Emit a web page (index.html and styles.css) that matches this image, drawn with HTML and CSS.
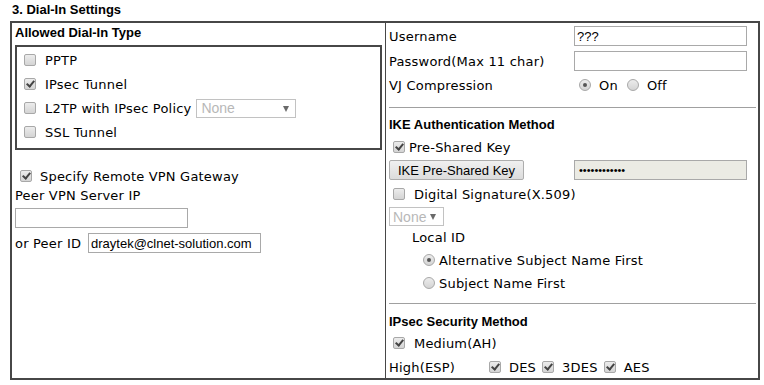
FILE: index.html
```html
<!DOCTYPE html>
<html lang="en">
<head>
  <meta charset="UTF-8" />
  <title>Dial-In Settings</title>
  <link rel="stylesheet" href="styles.css">
</head>
<body>

<h2 class="section-title">3. Dial-In Settings</h2>

<div class="panel">
  <!-- left: allowed types + remote gateway -->
  <div class="col col-left">
    <div class="group-title">Allowed Dial-In Type</div>
    <div class="type-box">
      <label class="type-row"><input type="checkbox" class="chk">PPTP</label>
      <label class="type-row"><input type="checkbox" class="chk" checked>IPsec Tunnel</label>
      <div class="type-row">
        <label class="inline"><input type="checkbox" class="chk">L2TP with IPsec Policy</label>
        <span class="select-wrap policy"><select disabled><option>None</option></select></span>
      </div>
      <label class="type-row"><input type="checkbox" class="chk">SSL Tunnel</label>
    </div>

    <div class="gateway">
      <label class="check-row gw"><input type="checkbox" class="chk" checked>Specify Remote VPN Gateway</label>
      <div class="plain-row">Peer VPN Server IP</div>
      <input type="text" class="text-input server-ip">
      <div class="peer-row">
        <span class="peer-label">or Peer ID</span>
        <input type="text" class="text-input" value="draytek@clnet-solution.com">
      </div>
    </div>
  </div>

  <!-- right: auth + security -->
  <div class="col col-right">
    <div class="field-row">
      <span class="field-label">Username</span>
      <input type="text" class="text-input" value="???">
    </div>
    <div class="field-row mt5">
      <span class="field-label">Password(Max 11 char)</span>
      <input type="password" class="text-input">
    </div>
    <div class="field-row mt4">
      <span class="field-label">VJ Compression</span>
      <label class="inline radio-opt"><input type="radio" name="vj" class="rad" checked>On</label>
      <label class="inline radio-opt off"><input type="radio" name="vj" class="rad">Off</label>
    </div>

    <div class="rule rule-top"></div>

    <div class="group-title ike-title">IKE Authentication Method</div>
    <label class="check-row psk"><input type="checkbox" class="chk" checked>Pre-Shared Key</label>
    <div class="field-row mt3">
      <span class="field-label"><button type="button" class="btn">IKE Pre-Shared Key</button></span>
      <input type="password" class="text-input key-input" value="123456789012" disabled>
    </div>
    <label class="check-row sig mt4"><input type="checkbox" class="chk">Digital Signature(X.509)</label>
    <div class="select-row">
      <span class="select-wrap cert"><select disabled><option>None</option></select></span>
    </div>
    <div class="local-id">Local ID</div>
    <label class="radio-row"><input type="radio" name="lid" class="rad" checked>Alternative Subject Name First</label>
    <label class="radio-row mt1"><input type="radio" name="lid" class="rad">Subject Name First</label>

    <div class="rule rule-bottom"></div>

    <div class="group-title sec-title">IPsec Security Method</div>
    <label class="check-row sig mt3"><input type="checkbox" class="chk" checked>Medium(AH)</label>
    <div class="field-row high-row">
      <span class="high-label">High(ESP)</span>
      <label class="inline cipher"><input type="checkbox" class="chk" checked>DES</label>
      <label class="inline cipher"><input type="checkbox" class="chk" checked>3DES</label>
      <label class="inline cipher"><input type="checkbox" class="chk" checked>AES</label>
    </div>
  </div>
</div>

</body>
</html>
```

FILE: styles.css
```css
* {
  box-sizing: border-box;
}
body {
  margin: 0;
  background: #fff;
  color: #000;
  font-family: "DejaVu Sans", Verdana, sans-serif;
  font-size: 13px;
  letter-spacing: 0.2px;
}

.section-title {
  margin: 0;
  height: 21px;
  padding: 2px 0 0 12px;
  letter-spacing: 0;
  font: bold 13px/16px "Liberation Sans", Arial, sans-serif;
}

.panel {
  margin-left: 10px;
  width: 750px;
  border: 2px solid #474747;
  display: grid;
  grid-template-columns: 374px 1fr;
}

.col-left {
  border-right: 1px solid #474747;
  padding: 2px 3px 0;
}
.col-right {
  padding: 3px 2px 1px 3px;
}

.group-title {
  letter-spacing: 0;
  font: bold 13px/16px "Liberation Sans", Arial, sans-serif;
}
.ike-title { margin-top: 9px; }
.sec-title { margin-top: 10px; }

/* checkbox / radio look */
.chk, .rad {
  appearance: none;
  -webkit-appearance: none;
  margin: 0;
  width: 12px;
  height: 12px;
  flex: none;
  position: relative;
  border: 1px solid #a8a8a8;
  background: linear-gradient(#ececec, #d4d4d4);
}
.chk {
  border-radius: 2px;
}
.chk:checked::after {
  content: "";
  position: absolute;
  left: 3px;
  top: 0px;
  width: 3px;
  height: 6px;
  border-right: 2px solid #444;
  border-bottom: 2px solid #444;
  transform: rotate(40deg);
}
.rad {
  border-radius: 50%;
}
.rad:checked::after {
  content: "";
  position: absolute;
  left: 3px;
  top: 3px;
  width: 4px;
  height: 4px;
  border-radius: 50%;
  background: #555;
}

.inline {
  display: inline-flex;
  align-items: center;
}

/* allowed types box */
.type-box {
  margin-top: 4px;
  border: 2px solid #474747;
  padding: 1px 0 4px 7px;
}
.type-row {
  display: flex;
  align-items: center;
  height: 24px;
}
.type-row .chk {
  margin-right: 9px;
}

.select-wrap {
  position: relative;
  display: inline-block;
}
.select-wrap select {
  appearance: none;
  -webkit-appearance: none;
  height: 19px;
  border: 1px solid #a9a9a9;
  border-radius: 0;
  background: #fff;
  color: #9a9a9a;
  padding: 0 0 0 4px;
  font: 14px "Liberation Sans", Arial, sans-serif;
}
.select-wrap::after {
  content: "";
  position: absolute;
  top: 7px;
  border-left: 3px solid transparent;
  border-right: 3px solid transparent;
  border-top: 6px solid #6a6a6a;
}
.policy {
  margin-left: 5px;
}
.policy select {
  width: 100px;
}
.policy::after {
  right: 7px;
}
.cert select {
  width: 55px;
  padding-left: 3px;
}
.cert::after {
  right: 8px;
}

/* remote gateway */
.gateway {
  margin-top: 16px;
}
.check-row {
  display: flex;
  align-items: center;
  height: 20px;
}
.gw {
  padding-left: 5px;
}
.gw .chk {
  margin-right: 8px;
}
.plain-row {
  height: 20px;
  line-height: 20px;
}
.text-input {
  width: 173px;
  height: 20px;
  margin: 0;
  border: 1px solid #a9a9a9;
  border-radius: 0;
  padding: 0 2px;
  color: #000;
  letter-spacing: 0;
  font: 13px "Liberation Sans", Arial, sans-serif;
}
.server-ip {
  display: block;
  margin-top: 2px;
}
.peer-row {
  display: flex;
  align-items: center;
  margin-top: 5px;
}
.peer-label {
  width: 73px;
}

/* right side rows */
.field-row {
  display: flex;
  align-items: center;
  height: 20px;
}
.field-label {
  width: 185px;
  flex: none;
}
.mt1 { margin-top: 1px; }
.mt3 { margin-top: 3px; }
.mt4 { margin-top: 4px; }
.mt5 { margin-top: 5px; }

.radio-opt .rad {
  margin: 0 8px 0 5px;
}
.radio-opt.off .rad {
  margin-left: 9px;
}

.rule {
  border-top: 1px solid #a0a0a0;
}
.rule-top { margin-top: 12px; }
.rule-bottom { margin-top: 9px; }

.psk {
  margin-top: 4px;
}
.psk .chk {
  margin: 0 4px;
}
.sig .chk {
  margin: 0 9px 0 4px;
}

.btn {
  width: 135px;
  height: 20px;
  padding: 0;
  border: 1px solid #adadad;
  border-radius: 2px;
  background: linear-gradient(#f0f0f0, #dcdcdc);
  color: #000;
  letter-spacing: 0;
  font: 13px "Liberation Sans", Arial, sans-serif;
}
.key-input {
  background: #ebebe4;
  font-size: 11px;
  padding-left: 4px;
}

.select-row {
  margin-top: 3px;
  height: 19px;
}
.local-id {
  margin-top: 1px;
  height: 22px;
  line-height: 22px;
  padding-left: 23px;
}
.radio-row {
  display: flex;
  align-items: center;
  height: 22px;
  padding-left: 34px;
}
.radio-row .rad {
  margin-right: 4px;
}

.high-row {
  margin-top: 4px;
}
.high-label {
  width: 100px;
  flex: none;
}
.cipher .chk {
  margin-right: 8px;
}
.cipher + .cipher {
  margin-left: 6px;
}
```
